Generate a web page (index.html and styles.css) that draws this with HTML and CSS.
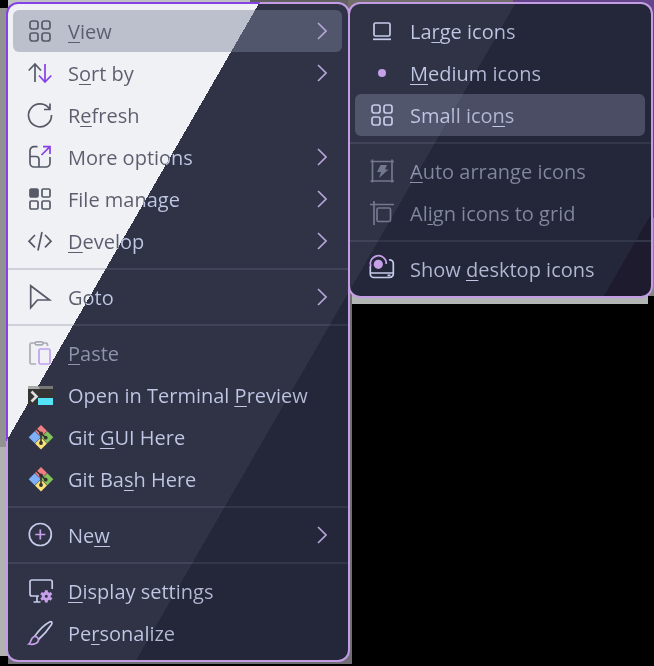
FILE: index.html
```
<!DOCTYPE html>
<html lang="en">
<head>
<meta charset="utf-8">
<meta name="viewport" content="width=device-width, initial-scale=1">
<title>Desktop menu</title>
<link rel="stylesheet" href="styles.css">
</head>
<body>
<svg class="symbols" aria-hidden="true">
  <symbol id="chevron" viewBox="0 0 10 18"><path d="M1 1l8 8-8 8"/></symbol>
  <symbol id="grid" viewBox="0 0 24 24"><rect x="2" y="2" width="8" height="8" rx="2.3"/><rect x="14" y="2" width="8" height="8" rx="2.3"/><rect x="2" y="14" width="8" height="8" rx="2.3"/><rect x="14" y="14" width="8" height="8" rx="2.3"/></symbol>
  <symbol id="git" viewBox="0 0 24 24">
    <g stroke="none"><path fill="#ef7f83" d="M13 0l6 6-6 6-6-6z"/><path fill="#7fb0fa" d="M6.700 6.200l6 6-6 6-6-6z"/><path fill="#82c35b" d="M19.300 6.200l6 6-6 6-6-6z"/><path fill="#fbe27a" d="M13 12.500l6 6-6 6-6-6z"/></g>
    <path stroke="#30302f" stroke-width="1.500" d="M8.500 4.200l9 8.300M13 8v10"/><g fill="#30302f" stroke="none"><circle cx="13" cy="8.300" r="1.900"/><circle cx="17.700" cy="12.700" r="1.900"/><circle cx="13" cy="18" r="1.900"/></g>
  </symbol>
</svg>
<main class="desktop">
  <div class="frame frame-main">
    <ul class="menu" role="menu" aria-label="Desktop">
      <li><button class="item active" role="menuitem"><svg class="icon latte"><use href="#grid"/></svg><span class="label"><u>V</u>iew</span><svg class="chevron"><use href="#chevron"/></svg></button></li>
      <li><button class="item" role="menuitem"><svg class="icon latte" viewBox="0 0 24 24"><path d="M7 21V3M.7 9.5L7 3l6 6.5"/><path class="accent" d="M17 3v18M11 14.5l6 6.5 6.3-6.5"/></svg><span class="label">S<u>o</u>rt by</span><svg class="chevron"><use href="#chevron"/></svg></button></li>
      <li><button class="item" role="menuitem"><svg class="icon latte" viewBox="0 0 24 24"><path d="M23.5 12A11.5 11.5 0 1 1 21.6 6M22 .5v6h-6"/></svg><span class="label">R<u>e</u>fresh</span></button></li>
      <li><button class="item" role="menuitem"><svg class="icon latte" viewBox="0 0 24 24"><path d="M9.5 1.7H6A4 4 0 0 0 2 5.7V18a4 4 0 0 0 4 4h12a4 4 0 0 0 4-4v-6M2 11.5h6a3 3 0 0 1 3 3V22"/><path class="accent" d="M13.5 10L22 1.7M15 1.7h7V9"/></svg><span class="label">More options</span><svg class="chevron"><use href="#chevron"/></svg></button></li>
      <li><button class="item" role="menuitem"><svg class="icon latte" viewBox="0 0 24 24"><rect class="solid" x="2" y="2" width="8" height="8" rx="1.2"/><rect x="14" y="2" width="8" height="8" rx="1.2"/><rect x="2" y="14" width="8" height="8" rx="1.2"/><rect x="14" y="14" width="8" height="8" rx="1.2"/></svg><span class="label">File manage</span><svg class="chevron"><use href="#chevron"/></svg></button></li>
      <li><button class="item" role="menuitem"><svg class="icon latte" viewBox="0 0 24 24"><path d="M7 6l-6 6.2 6 6.2M17 6l6 6.2-6 6.2M14 3l-4 18.5"/></svg><span class="label"><u>D</u>evelop</span><svg class="chevron"><use href="#chevron"/></svg></button></li>
      <li class="rule" role="separator"></li>
      <li><button class="item" role="menuitem"><svg class="icon latte" viewBox="0 0 24 24"><path d="M2.7.8v22L9.5 15h12z"/></svg><span class="label">Goto</span><svg class="chevron"><use href="#chevron"/></svg></button></li>
      <li class="rule" role="separator"></li>
      <li><button class="item" role="menuitem" disabled><svg class="icon latte" viewBox="0 0 24 24"><path d="M7 2H3.5A1.5 1.5 0 0 0 2 3.5v18A1.5 1.5 0 0 0 3.5 23H8M15 2h3a1.5 1.5 0 0 1 1.5 1.5V5"/><rect x="7" y=".8" width="8" height="3" rx="1.5"/><rect class="accent" x="11" y="8" width="11" height="15" rx="1.5"/></svg><span class="label dark-key"><u>P</u>aste</span></button></li>
      <li><button class="item" role="menuitem"><svg class="icon" viewBox="0 0 24 24"><g stroke="none"><path fill="#353434" d="M0 3h25v19H0z"/><path fill="#777" d="M0 3h25v3H0z"/><path fill="#aaa" d="M0 3h10l2 3H0z"/><path fill="#55e3f8" d="M10 15h15v7H10z"/></g><path stroke="#dedede" stroke-width="2.6" d="M3.5 8.500l5 5-5 5"/></svg><span class="label">Open in Terminal <u>P</u>review</span></button></li>
      <li><button class="item" role="menuitem"><svg class="icon"><use href="#git"/></svg><span class="label">Git <u>G</u>UI Here</span></button></li>
      <li><button class="item" role="menuitem"><svg class="icon"><use href="#git"/></svg><span class="label">Git Ba<u>s</u>h Here</span></button></li>
      <li class="rule" role="separator"></li>
      <li><button class="item" role="menuitem"><svg class="icon" viewBox="0 0 24 24"><circle cx="12.3" cy="11.5" r="11"/><path class="accent" d="M12.3 6.500v10M7.3 11.500h10"/></svg><span class="label">Ne<u>w</u></span><svg class="chevron"><use href="#chevron"/></svg></button></li>
      <li class="rule" role="separator"></li>
      <li><button class="item" role="menuitem"><svg class="icon" viewBox="0 0 24 24"><path d="M24.2 10V3A2 2 0 0 0 22.2 1H4A2 2 0 0 0 2 3v12a2 2 0 0 0 2 2h7M9 17v6M5.5 23h7"/><circle class="accent" cx="18.3" cy="17.3" r="3" stroke-width="3"/><path class="accent" stroke-width="3" d="M18.3 13.500v-2.300M18.3 21.100v2.300M15 15.400l-2-1.200M21.600 19.200l2 1.200M15 19.200l-2 1.200M21.600 15.400l2-1.200"/></svg><span class="label"><u>D</u>isplay settings</span></button></li>
      <li><button class="item" role="menuitem"><svg class="icon" viewBox="0 0 24 24"><path d="M6.500 15.500C11 9 16 4 21.500 1c2-1 3.200.5 2 2.500C20 9 15.500 14 10.500 18.500"/><path class="accent" d="M6.500 15.500c2-.2 4 1.500 4 3.500 0 3-4.500 5-9.500 4 2.500-1.500 1-6 5.500-7.500z"/></svg><span class="label">Pe<u>r</u>sonalize</span></button></li>
    </ul>
  </div>
  <div class="frame frame-sub">
    <ul class="menu" role="menu" aria-label="View">
      <li><button class="item" role="menuitem"><svg class="icon" viewBox="0 0 24 24"><rect x="4" y="4" width="16" height="13" rx="1.5"/><path d="M3 20.300h18"/></svg><span class="label">La<u>r</u>ge icons</span></button></li>
      <li><button class="item" role="menuitemradio" aria-checked="true"><svg class="icon" viewBox="0 0 24 24"><circle class="dot" cx="12" cy="12" r="4"/></svg><span class="label"><u>M</u>edium icons</span></button></li>
      <li><button class="item active" role="menuitem"><svg class="icon"><use href="#grid"/></svg><span class="label">Small ico<u>n</u>s</span></button></li>
      <li class="rule" role="separator"></li>
      <li><button class="item" role="menuitem" disabled><svg class="icon" viewBox="0 0 24 24"><path d="M2.500.5v23M22 .5v23M.5 2.500h23.500M.5 22h23.500"/><path class="solid" stroke-width="0" d="M10.500 6h6.500l-2 4.500h3.500L9 19l2-6H7z"/></svg><span class="label"><u>A</u>uto arrange icons</span></button></li>
      <li><button class="item" role="menuitem" disabled><svg class="icon" viewBox="0 0 24 24"><path d="M4 0v24M0 3.500h24"/><rect x="7" y="7" width="13.500" height="13.500" rx="1.500"/></svg><span class="label">Al<u>i</u>gn icons to grid</span></button></li>
      <li class="rule" role="separator"></li>
      <li><button class="item" role="menuitem"><svg class="icon" viewBox="0 0 24 24"><path d="M.3 9v8a3.500 3.500 0 0 0 3.500 3.500h16a3.500 3.500 0 0 0 3.500-3.500V6.500A3.500 3.500 0 0 0 19 3M.5 16h22.500M17.500 18.300h3"/><path class="accent" d="M.8 9.500A8 8 0 1 1 16.300 7"/><circle class="dot" cx="8.300" cy="7.300" r="4.600"/></svg><span class="label">Show <u>d</u>esktop icons</span></button></li>
    </ul>
  </div>
</main>
</body>
</html>
```
FILE: styles.css
```
/* Every themed surface shares one diagonal split, anchored to the window. */
:root {
  --cut-1: 226px;
  --cut-2: 448px;
  --cut-3: 671px;
  --mauve: #c6a0e9;
}

* { box-sizing: border-box; }

body {
  margin: 0;
  background: #000;
  font-family: "Open Sans", "Noto Sans", sans-serif;
}

.symbols { display: none; }

.desktop {
  display: grid;
  grid-template-columns: minmax(0, 352fr) minmax(0, 302fr);
  align-items: start;
}

.frame-main {
  padding: 2px 2px 2px 6px;
  background:
    linear-gradient(#000, #000) 0 0 / 8px 8px no-repeat,
    linear-gradient(#000, #000) 0 100% / 8px 8px no-repeat,
    linear-gradient(90deg, #bfc1c2 250px, #625f60 250px) 0 0 / 100% 8px no-repeat,
    linear-gradient(#929292 447px, #b2b2b2 447px) 0 0 / 8px 100% no-repeat,
    #706d75;
}

.frame-sub {
  position: relative;
  margin-left: -4px;
  padding: 2px 1px 6px 0;
  background:
    linear-gradient(#000, #000) 100% 100% / 6px 8px no-repeat,
    linear-gradient(90deg, #706d6b 165px, #64458c 165px) 0 0 / 100% 8px no-repeat,
    linear-gradient(#64458c 218px, #858288 218px) 100% 0 / 6px 100% no-repeat,
    linear-gradient(#b1b5b3, #b1b5b3) 4px 100% / 100% 16px no-repeat;
}

.menu {
  margin: 0;
  padding: 6px 6px 6px 5px;
  list-style: none;
  border: 2px solid transparent;
  border-radius: 12px;
  background:
    linear-gradient(120deg, #eff1f5 var(--cut-1), #303346 var(--cut-1) var(--cut-2), #24273a var(--cut-2) var(--cut-3), #1f1b2e var(--cut-3)) fixed padding-box,
    linear-gradient(120deg, #8542e6 var(--cut-1), #c39ce4 var(--cut-1)) fixed border-box;
}

.item {
  display: flex;
  align-items: center;
  gap: 16px;
  width: 100%;
  height: 42px;
  padding: 0 15px;
  border: 0;
  border-radius: 6px;
  background: none;
  color: #c5cce9;
  font: inherit;
  font-size: 20px;
  line-height: 28px;
  text-align: left;
}

.active {
  background: linear-gradient(120deg, #bcc0cc var(--cut-1), #51566c var(--cut-1) var(--cut-2), #4b4d65 var(--cut-2)) fixed;
}

.label {
  --key: #c1c8e5;
  flex: 1;
  padding-top: 2px;
  white-space: nowrap;
  color: transparent;
  background: linear-gradient(120deg, #5a5d6d var(--cut-1), #c1c8e5 var(--cut-1) var(--cut-2), #b3b9d3 var(--cut-2)) fixed text;
}

.latte + .label:not(.dark-key) { --key: #5a5d6d; }

.label u {
  text-decoration: underline 1px var(--key);
  text-underline-offset: 3px;
  text-decoration-skip-ink: none;
}

.item:disabled .label { opacity: 0.66; }
.item:disabled .icon { opacity: 0.45; }

.icon {
  --accent: var(--mauve);
  flex: none;
  width: 24px;
  height: 24px;
  overflow: visible;
  fill: none;
  stroke: currentColor;
  stroke-width: 1.7;
}

.latte {
  --accent: #8740e8;
  color: #565967;
}

#grid, #git { overflow: visible; }

.accent { stroke: var(--accent); }
.solid { fill: currentColor; }
.dot { fill: var(--accent); stroke: none; }

.chevron {
  flex: none;
  width: 10px;
  height: 18px;
  fill: none;
  stroke: #b9a6d9;
  stroke-width: 1.6;
}

.rule {
  display: flex;
  align-items: center;
  height: 14px;
  margin: 0 -6px 0 -5px;
}

.rule::before {
  content: "";
  flex: 1;
  height: 2px;
  background: linear-gradient(120deg, #cdd0d8 var(--cut-1), #414458 var(--cut-1) var(--cut-2), #333649 var(--cut-2)) fixed;
}
```
